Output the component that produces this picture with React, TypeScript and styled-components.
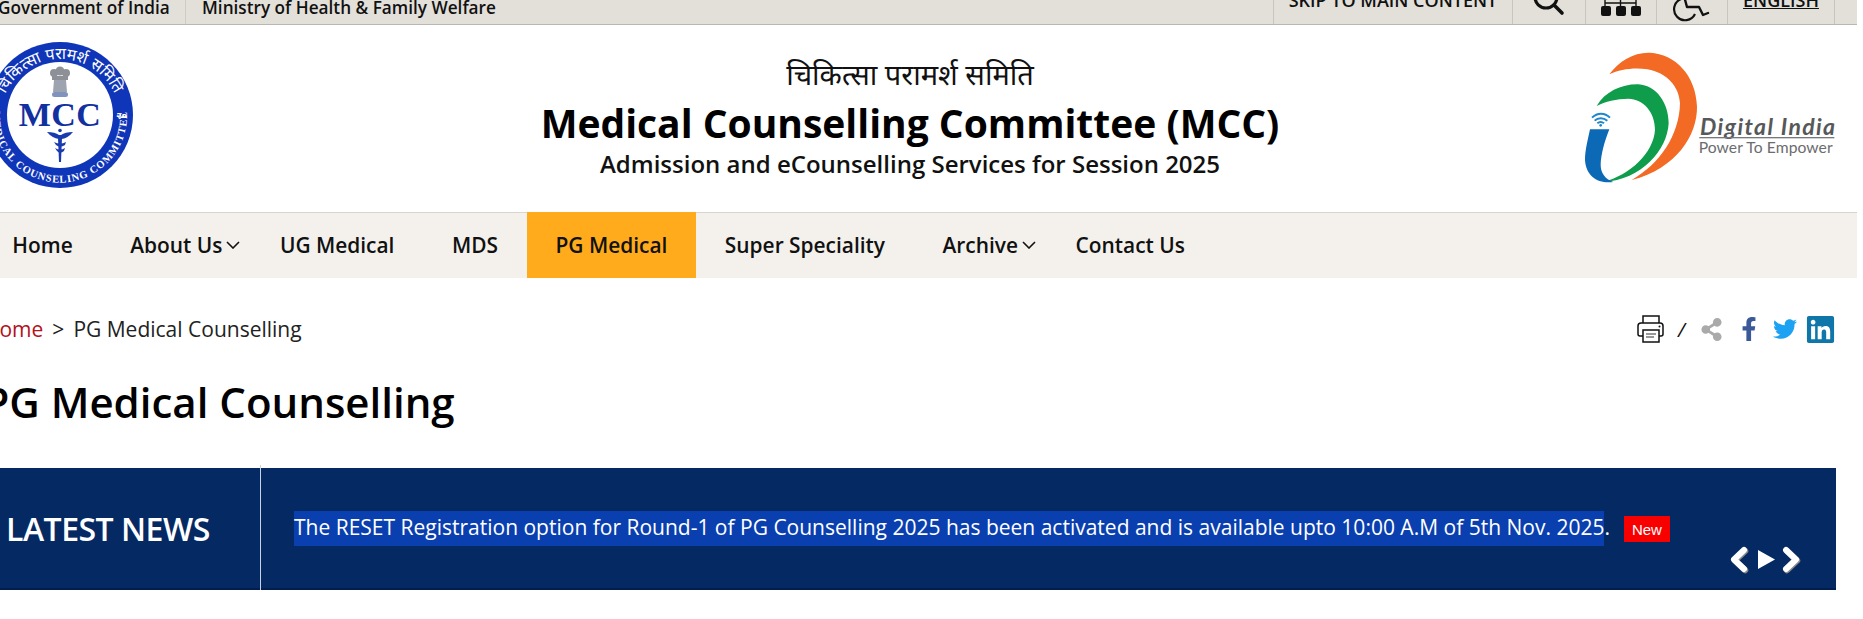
import React from "react";
import styled, { createGlobalStyle } from "styled-components";
import { FaFacebookF, FaTwitter, FaLinkedin, FaShareAlt } from "react-icons/fa";

const Global = createGlobalStyle`
  html, body { margin: 0; padding: 0; background: #fff; }
  body { width: 1863px; height: 619px; overflow: hidden; font-family: "Open Sans", "Noto Sans", sans-serif; color: #000; }
`;
const Page = styled.div`width: 1857px; overflow: hidden; background: #fff;`;

const TopBar = styled.div`
  display: flex; justify-content: space-between; height: 24px; overflow: hidden;
  background: #e3e0da; border-bottom: 1px solid #b9b7b2; box-sizing: content-box;
`;
const TopGroup = styled.div`display: flex;`;
const TopText = styled.div<{ $w?: number; $pl?: number; $ml?: number; $noBorder?: boolean }>`
  box-sizing: border-box; width: ${p => (p.$w ? p.$w + "px" : "auto")};
  margin-left: ${p => p.$ml ?? 0}px; padding-left: ${p => p.$pl ?? 0}px;
  font-size: 17.2px; font-weight: 600; line-height: 16px; color: #111;
  white-space: nowrap; border-right: ${p => (p.$noBorder ? "none" : "1px solid #cfccc6")};
`;
const TopCell = styled.div<{ $w: number; $first?: boolean }>`
  box-sizing: border-box; width: ${p => p.$w}px; height: 24px; display: flex; justify-content: center; align-items: flex-start;
  border-right: 1px solid #c8c5bf; ${p => (p.$first ? "border-left: 1px solid #c8c5bf;" : "")}
`;
const TopLabel = styled.span<{ $u?: boolean }>`
  font-size: 18px; font-weight: 600; line-height: 14px; margin-top: -7px; color: #111; white-space: nowrap;
  ${p => (p.$u ? "text-decoration: underline;" : "")}
`;
const TopRight = styled(TopGroup)`margin-right: 22px;`;

const Header = styled.header`display: flex; height: 187px;`;
const SealWrap = styled.div`flex: none; width: 146px; height: 146px; margin: 17px 0 0 -13px;`;
const TitleBlock = styled.div`flex: none; width: 800px; margin-left: 377px; padding-top: 33px; text-align: center;`;
const HindiLine = styled.div`
  font-family: "Noto Sans Devanagari", "Lohit Devanagari", "FreeSans", "Noto Sans", sans-serif;
  font-size: 29px; line-height: 40px; color: #111;
`;
const MainTitle = styled.h1`margin: 0; font-size: 39px; font-weight: 700; line-height: 50px; color: #000;`;
const SubTitle = styled.div`font-size: 24px; font-weight: 600; line-height: 32px; color: #111;`;
const LogoWrap = styled.div`flex: none; margin-left: auto; width: 297px; height: 160px; margin-top: 15px;`;

const Nav = styled.nav`
  display: flex; height: 65px; margin-left: -16.5px; background: #f4f1ed; border-top: 1px solid #d9d6d0;
`;
const NavItem = styled.a<{ $active?: boolean }>`
  display: flex; align-items: center; padding: 0 28.75px; height: 66px; margin-top: -1px;
  font-size: 20.9px; font-weight: 600; color: #111; white-space: nowrap;
  background: ${p => (p.$active ? "#ffab1c" : "transparent")};
`;
const Caret = styled.svg`flex: none; width: 14px; height: 8px; margin: 0 -18px 0 4px;`;

const Main = styled.main`padding-right: 21px;`;
const CrumbRow = styled.div`display: flex; justify-content: space-between; align-items: center; height: 30px; margin-top: 36px;`;
const Crumbs = styled.div`display: flex; font-size: 21px; line-height: 30px; color: #222; white-space: nowrap; margin-left: -16px;`;
const CrumbLink = styled.a`color: #b3111b;`;
const CrumbSep = styled.span`margin: 0 9px;`;
const Tools = styled.div`display: flex; align-items: center; height: 30px;`;
const Slash = styled.span`font-size: 20px; font-style: italic; margin: 0 15px 0 14px; color: #111;`;
const ToolIcon = styled.span<{ $c: string; $ml?: number; $size: number }>`
  display: flex; color: ${p => p.$c}; margin-left: ${p => p.$ml ?? 0}px; font-size: ${p => p.$size}px;
`;
const PageTitle = styled.h2`
  margin: 29px 0 37px -16.5px; font-size: 42px; font-weight: 600; line-height: 58px; color: #000; white-space: nowrap;
`;

const Band = styled.section`
  display: flex; height: 122px; box-sizing: border-box; background: #052a63; border-bottom: 2px solid #021d4f; color: #fff;
`;
const BandLabel = styled.div`
  position: relative; flex: none; width: 261px; box-sizing: border-box; padding: 39px 0 0 6px;
  font-size: 32px; font-weight: 600; letter-spacing: -0.5px; line-height: 44px; white-space: nowrap;
  &::after { content: ""; position: absolute; top: -3px; bottom: -5px; right: 0; width: 1px; background: #c9d2e0; }
`;
const Ticker = styled.div`flex: 1; display: flex; align-items: flex-start; padding: 43px 0 0 33px; white-space: nowrap;`;
const Highlight = styled.span`font-size: 21px; line-height: 33px; padding-bottom: 2px; background: #0a3fb0;`;
const Dot = styled.span`font-size: 21px; line-height: 33px;`;
const NewBadge = styled.span`
  margin: 5px 0 0 14px; width: 46px; height: 26px; background: #f90000; color: #fff;
  font-family: "Liberation Sans", sans-serif; font-size: 15px; font-weight: 400; line-height: 28px; text-align: center;
`;
const Controls = styled.div`flex: none; align-self: flex-end; display: flex; margin: 0 34px 14px 0;`;

const FlagSvg = styled.svg`display: block; overflow: visible;`;

const Seal = () => (
  <FlagSvg width={146} height={146} viewBox="0 0 146 146">
    <defs>
      <path id="sealTop" d="M 14 88 A 60 60 0 1 1 132 88" />
      <path id="sealBottom" d="M 7 62 A 67 67 0 1 0 139 62" />
    </defs>
    <circle cx="73" cy="73" r="73" fill="#0f35b8" />
    <circle cx="73" cy="73" r="53" fill="#fff" />
    <text fontFamily="'Noto Sans Devanagari','Lohit Devanagari','FreeSans',sans-serif" fontSize="16" fill="#fff">
      <textPath href="#sealTop" startOffset="50%" textAnchor="middle">चिकित्सा परामर्श समिति</textPath>
    </text>
    <text fontFamily="'Liberation Serif',serif" fontSize="10.5" fontWeight="700" fill="#fff" letterSpacing="0.9">
      <textPath href="#sealBottom" startOffset="50%" textAnchor="middle">MEDICAL COUNSELING COMMITTEE</textPath>
    </text>
    <text x="73" y="84" textAnchor="middle" fontFamily="'Liberation Serif',serif" fontWeight="700" fontSize="34" fill="#12309f" letterSpacing="0.5">MCC</text>
    {/* national emblem */}
    <g fill="#8d9197">
      <circle cx="67" cy="31" r="4" />
      <circle cx="73" cy="29" r="4.5" />
      <circle cx="79" cy="31" r="4" />
      <rect x="65" y="34" width="16" height="4" />
      <path d="M67 38 h12 l1 12 h-14 z" fill="#9da4b0" />
      <rect x="65" y="50" width="16" height="5" rx="2.5" fill="#7f93bd" />
    </g>
    {/* caduceus */}
    <g fill="#1a3bb0">
      <path d="M60 90 Q68 90 72 93 L74 93 Q78 90 86 90 Q81 96 75 97 L72 97 Q65 96 60 90 Z" />
      <circle cx="73" cy="88.5" r="1.8" />
      <path d="M71 96 h4 l-1 24 h-2 z" />
      <path d="M67 100 Q73 103 79 100 L78 103 Q73 106 69 103 Z M68 106 Q73 109 78 106 L77 109 Q73 112 70 109 Z" />
    </g>
    <text x="129" y="77" fontSize="10" fill="#fff" fontWeight="700" fontFamily="'Noto Sans Devanagari','Lohit Devanagari','FreeSans',sans-serif">२०</text>
  </FlagSvg>
);

const DigitalIndia = () => (
  <FlagSvg width={297} height={160} viewBox="0 0 891 480">
    <path d="M148 103 C178 62 222 36 270 38 C345 42 408 105 411 200 C412 285 350 385 215 420 C300 372 358 285 360 190 C358 140 320 98 262 88 C222 82 180 88 148 103 Z" fill="#f26a23" />
    <path d="M110 198 C135 155 185 132 235 133 C290 136 326 190 326 250 C322 330 245 420 130 426 C210 405 280 340 285 270 C285 215 250 178 205 176 C170 176 135 185 110 198 Z" fill="#0f9d4b" />
    <path d="M90 268 H148 C135 300 122 345 122 375 C122 398 135 418 160 426 C115 432 78 410 75 360 C75 330 84 298 90 268 Z" fill="#0b69b5" />
    <g fill="none" stroke="#1e86c9" strokeWidth="6">
      <path d="M96 233 C112 217 134 217 150 233" />
      <path d="M104 242 C114 232 130 232 142 242" />
      <path d="M112 250 C118 245 126 245 132 250" />
    </g>
    <circle cx="122" cy="256" r="4" fill="#1e86c9" />
    <text x="420" y="284" textLength="405" lengthAdjust="spacing" fontFamily="'Lato','Open Sans',sans-serif" fontStyle="italic" fontWeight="700" fontSize="69" fill="#57585a">Digital India</text>
    <rect x="418" y="291" width="405" height="4" fill="#77787a" />
    <text x="416" y="338" textLength="402" lengthAdjust="spacing" fontFamily="'Lato','Open Sans',sans-serif" fontSize="47" fill="#6b6c6e">Power To Empower</text>
  </FlagSvg>
);

const SearchIcon = () => (
  <svg width="36" height="24" viewBox="0 0 36 24">
    <circle cx="15" cy="-3" r="11" fill="none" stroke="#111" strokeWidth="3.2" />
    <path d="M23 5 L31 13" stroke="#111" strokeWidth="3.6" strokeLinecap="round" />
  </svg>
);
const SitemapIcon = () => (
  <svg width="42" height="24" viewBox="0 0 42 24">
    <path d="M5 3 H36 M5 0 V7 M20.5 0 V7 M36 0 V7" stroke="#111" strokeWidth="1.4" fill="none" />
    <rect x="1" y="6" width="10" height="10" rx="2" fill="#111" />
    <rect x="16" y="6" width="10" height="10" rx="2" fill="#111" />
    <rect x="31" y="6" width="10" height="10" rx="2" fill="#111" />
  </svg>
);
const WheelIcon = () => (
  <svg width="40" height="24" viewBox="0 0 40 24">
    <path d="M9 -1 A11 11 0 1 0 23 14" fill="none" stroke="#111" strokeWidth="2.2" />
    <path d="M12 -4 L15 7 H27 L31 15 L36 13" fill="none" stroke="#111" strokeWidth="2.4" strokeLinecap="round" strokeLinejoin="round" />
  </svg>
);
const PrinterIcon = () => (
  <svg width="27" height="28" viewBox="0 0 27 28" fill="none" stroke="#111" strokeWidth="1.5">
    <path d="M6 8 V1 H22 V8" />
    <path d="M6 21 H3 Q1 21 1 19 V11 Q1 8 4 8 H23 Q26 8 26 11 V19 Q26 21 24 21 H22" />
    <rect x="6" y="15" width="16" height="12" />
    <path d="M9 19 H19 M9 22 H17" stroke="#777" strokeWidth="1.6" />
    <circle cx="22.5" cy="11.5" r="1" fill="#111" stroke="none" />
  </svg>
);
const CaretIcon = () => (
  <Caret viewBox="0 0 14 8"><path d="M1 1 L7 7 L13 1" fill="none" stroke="#111" strokeWidth="1.6" /></Caret>
);
const Controller = () => (
  <svg width="72" height="28" viewBox="0 0 72 28">
    <g fill="none" stroke="#8b8b8b" strokeWidth="6.5" strokeLinecap="round" strokeLinejoin="round" transform="translate(1 1)">
      <path d="M14 4 L4 13.5 L14 23" /><path d="M56 4 L66 13.5 L56 23" />
    </g>
    <g fill="none" stroke="#fff" strokeWidth="6" strokeLinecap="round" strokeLinejoin="round">
      <path d="M14 4 L4 13.5 L14 23" /><path d="M56 4 L66 13.5 L56 23" />
    </g>
    <path d="M28 4 L45 13.5 L28 23 Z" fill="#fff" />
  </svg>
);

export default function App() {
  return (
    <Page>
      <Global />
      <TopBar>
        <TopGroup>
          <TopText $ml={-2} $w={188}>Government of India</TopText>
          <TopText $pl={16} $noBorder>Ministry of Health &amp; Family Welfare</TopText>
        </TopGroup>
        <TopRight>
          <TopCell $w={240} $first><TopLabel>SKIP TO MAIN CONTENT</TopLabel></TopCell>
          <TopCell $w={73}><SearchIcon /></TopCell>
          <TopCell $w={71}><SitemapIcon /></TopCell>
          <TopCell $w={71}><WheelIcon /></TopCell>
          <TopCell $w={107}><TopLabel $u>ENGLISH</TopLabel></TopCell>
        </TopRight>
      </TopBar>
      <Header>
        <SealWrap><Seal /></SealWrap>
        <TitleBlock>
          <HindiLine>चिकित्सा परामर्श समिति</HindiLine>
          <MainTitle>Medical Counselling Committee (MCC)</MainTitle>
          <SubTitle>Admission and eCounselling Services for Session 2025</SubTitle>
        </TitleBlock>
        <LogoWrap><DigitalIndia /></LogoWrap>
      </Header>
      <Nav>
        <NavItem>Home</NavItem>
        <NavItem>About Us<CaretIcon /></NavItem>
        <NavItem>UG Medical</NavItem>
        <NavItem>MDS</NavItem>
        <NavItem $active>PG Medical</NavItem>
        <NavItem>Super Speciality</NavItem>
        <NavItem>Archive<CaretIcon /></NavItem>
        <NavItem>Contact Us</NavItem>
      </Nav>
      <Main>
        <CrumbRow>
          <Crumbs>
            <CrumbLink>Home</CrumbLink>
            <CrumbSep>&gt;</CrumbSep>
            PG Medical Counselling
          </Crumbs>
          <Tools>
            <PrinterIcon />
            <Slash>/</Slash>
            <ToolIcon $c="#aaaaaa" $size={23}><FaShareAlt /></ToolIcon>
            <ToolIcon $c="#3b5998" $size={24} $ml={14}><FaFacebookF /></ToolIcon>
            <ToolIcon $c="#1da1f2" $size={24} $ml={12}><FaTwitter /></ToolIcon>
            <ToolIcon $c="#0e76a8" $size={31} $ml={8}><FaLinkedin /></ToolIcon>
          </Tools>
        </CrumbRow>
        <PageTitle>PG Medical Counselling</PageTitle>
        <Band>
          <BandLabel>LATEST NEWS</BandLabel>
          <Ticker>
            <Highlight>The RESET Registration option for Round-1 of PG Counselling 2025 has been activated and is available upto 10:00 A.M of 5th Nov. 2025</Highlight>
            <Dot>.</Dot>
            <NewBadge>New</NewBadge>
          </Ticker>
          <Controls><Controller /></Controls>
        </Band>
      </Main>
    </Page>
  );
}
